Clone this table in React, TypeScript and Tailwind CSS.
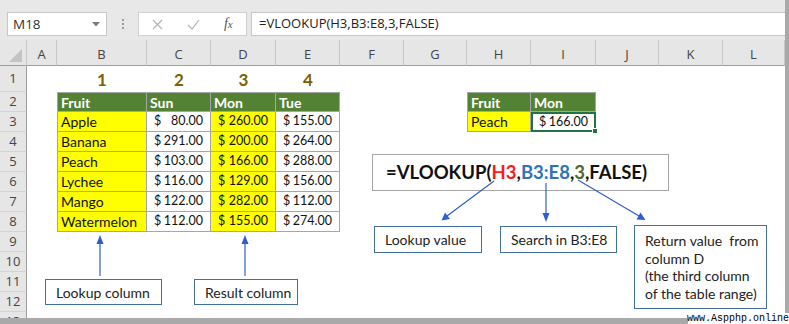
import React from "react";

const COLS = ["A", "B", "C", "D", "E", "F", "G", "H", "I", "J", "K", "L"];

type Row = [string, number, number, number];
const DATA: Row[] = [
  ["Apple", 80, 260, 155],
  ["Banana", 291, 200, 264],
  ["Peach", 103, 166, 288],
  ["Lychee", 116, 129, 156],
  ["Mango", 122, 282, 112],
  ["Watermelon", 112, 155, 274],
];

const fmt = (n: number) => n.toFixed(2);

function Money({ v, yellow }: { v: number; yellow?: boolean }) {
  return (
    <div
      className={
        yellow
          ? "flex items-center justify-between pl-[7px] pr-[7px] bg-[#ffff00] border-r border-b border-[#a6a6a6] text-[#111] text-[12.5px]"
          : "flex items-center justify-between pl-[7px] pr-[7px] bg-white border-r border-b border-[#a6a6a6] text-[#111] text-[12.5px]"
      }
    >
      <span>$</span>
      <span className="tabular-nums">{fmt(v)}</span>
    </div>
  );
}

function RowHead({ n }: { n: number }) {
  return (
    <div className="flex items-center justify-center bg-[#e6e6e6] border-r border-r-[#9e9e9e] border-b border-b-[#d3d3d3] text-[#444] font-['Open_Sans'] text-[13px]">
      {n}
    </div>
  );
}

function Empty() {
  return <div className="bg-white" />;
}

export default function App() {
  const rowsAfter = [9, 10, 11, 12, 13];
  return (
    <div className="relative w-[789px] h-[324px] bg-[#a9a9a9] overflow-hidden font-['Lato'] text-[14px]">
      <div className="w-[785px] h-[318px] bg-white flex flex-col overflow-hidden">
        {/* formula bar */}
        <div className="h-[40px] shrink-0 bg-[#e8e8e8] flex items-start pt-[12px] pl-[7px] gap-0">
          <div className="w-[100px] h-[24px] bg-white border border-[#c6c6c6] flex items-center pl-[5px] pr-[6px] justify-between">
            <span className="font-['Open_Sans'] text-[13.5px] text-[#333]">M18</span>
            <svg width="8" height="5" viewBox="0 0 8 5">
              <path d="M0 0 L8 0 L4 4.5 Z" fill="#7a7a7a" />
            </svg>
          </div>
          <div className="w-[31px] h-[24px] flex flex-col items-center justify-center gap-[2px]">
            <span className="w-[2px] h-[2px] bg-[#9a9a9a]" />
            <span className="w-[2px] h-[2px] bg-[#9a9a9a]" />
            <span className="w-[2px] h-[2px] bg-[#9a9a9a]" />
          </div>
          <div className="w-[109px] h-[24px] bg-white border border-[#d0d0d0] flex items-center">
            <div className="w-[37px] flex justify-center">
              <svg width="11" height="11" viewBox="0 0 11 11">
                <path d="M1 1 L10 10 M10 1 L1 10" stroke="#b3b3b3" strokeWidth="1.2" />
              </svg>
            </div>
            <div className="w-[36px] flex justify-center">
              <svg width="13" height="11" viewBox="0 0 13 11">
                <path d="M1 6 L5 10 L12 1" stroke="#b3b3b3" strokeWidth="1.2" fill="none" />
              </svg>
            </div>
            <div className="w-[36px] flex justify-center">
              <span className="font-['Liberation_Serif'] italic text-[14px] text-[#555] leading-none">
                f<span className="text-[11px]">x</span>
              </span>
            </div>
          </div>
          <div className="ml-[4px] flex-1 h-[24px] bg-white border border-[#c6c6c6] border-r-0 flex items-center pl-[7px]">
            <span className="font-['Open_Sans'] text-[13px] text-[#222]">=VLOOKUP(H3,B3:E8,3,FALSE)</span>
          </div>
        </div>

        {/* sheet */}
        <div className="grid grid-cols-[27px_30px_90px_64px_65px_64px_64px_63px_64px_65px_63px_64px_62px] grid-rows-[26px_26px_20px_20px_20px_20px_20px_20px_20px_20px_20px_20px_20px_20px]">
          {/* column header row */}
          <div className="bg-[#e6e6e6] border-r border-r-[#c6c6c6] border-b border-b-[#9e9e9e] flex items-end justify-end pr-[4px] pb-[3px]">
            <svg width="13" height="13" viewBox="0 0 13 13">
              <path d="M13 0 L13 13 L0 13 Z" fill="#c3c3c3" />
            </svg>
          </div>
          {COLS.map((c) => (
            <div
              key={c}
              className="bg-[#e6e6e6] border-r border-r-[#c6c6c6] border-b border-b-[#9e9e9e] flex items-center justify-center pt-[4px] font-['Open_Sans'] text-[13px] text-[#444]"
            >
              {c}
            </div>
          ))}

          {/* row 1 */}
          <RowHead n={1} />
          <Empty />
          {[1, 2, 3, 4].map((n) => (
            <div key={n} className="flex items-center justify-center pt-[2px] font-bold text-[17px] text-[#7f6000]">
              {n}
            </div>
          ))}
          {Array.from({ length: 7 }).map((_, i) => (
            <Empty key={i} />
          ))}

          {/* row 2 */}
          <RowHead n={2} />
          <Empty />
          <div className="flex items-center pl-[3px] bg-[#548235] border border-[#a6a6a6] text-white font-bold">Fruit</div>
          <div className="flex items-center pl-[3px] bg-[#548235] border-r border-y border-[#a6a6a6] text-white font-bold">Sun</div>
          <div className="flex items-center pl-[3px] bg-[#548235] border-r border-y border-[#a6a6a6] text-white font-bold">Mon</div>
          <div className="flex items-center pl-[3px] bg-[#548235] border-r border-y border-[#a6a6a6] text-white font-bold">Tue</div>
          <Empty />
          <Empty />
          <div className="flex items-center pl-[3px] bg-[#548235] border border-[#a6a6a6] text-white font-bold">Fruit</div>
          <div className="flex items-center pl-[3px] bg-[#548235] border-r border-y border-[#a6a6a6] text-white font-bold">Mon</div>
          <Empty />
          <Empty />
          <Empty />

          {/* rows 3-8 */}
          {DATA.map((d, i) => (
            <React.Fragment key={d[0]}>
              <RowHead n={i + 3} />
              <Empty />
              <div className="flex items-center pl-[3px] bg-[#ffff00] border-l border-r border-b border-[#a6a6a6] text-[#111]">
                {d[0]}
              </div>
              <Money v={d[1]} />
              <Money v={d[2]} yellow />
              <Money v={d[3]} />
              <Empty />
              <Empty />
              {i === 0 ? (
                <>
                  <div className="flex items-center pl-[3px] bg-[#ffff00] border-l border-r border-b border-[#a6a6a6] text-[#111]">
                    Peach
                  </div>
                  <div className="relative flex items-center justify-between pl-[6px] pr-[6px] bg-white border-2 border-[#217346] text-[#111] text-[12.5px]">
                    <span>$</span>
                    <span className="tabular-nums">166.00</span>
                    <span className="absolute right-[-4px] bottom-[-4px] w-[6px] h-[6px] bg-[#217346] border border-white" />
                  </div>
                </>
              ) : (
                <>
                  <Empty />
                  <Empty />
                </>
              )}
              <Empty />
              <Empty />
              <Empty />
            </React.Fragment>
          ))}

          {/* rows 9-13 */}
          {rowsAfter.map((n) => (
            <React.Fragment key={n}>
              <RowHead n={n} />
              {COLS.map((c) => (
                <Empty key={c} />
              ))}
            </React.Fragment>
          ))}
        </div>
      </div>

      {/* floating shapes */}
      <div className="absolute left-[372px] top-[154px] w-[297px] h-[37px] bg-white border border-[#a6a6a6] flex items-center pl-[13px] font-bold text-[18.5px] text-[#111]">
        <span>=VLOOKUP(</span>
        <span className="text-[#ff1a1a]">H3</span>
        <span>,</span>
        <span className="text-[#2e75b6]">B3:E8</span>
        <span>,</span>
        <span className="text-[#4b6b2e]">3</span>
        <span>,FALSE)</span>
      </div>

      <div className="absolute left-[374px] top-[226px] w-[108px] h-[27px] bg-white border border-[#41719c] flex items-center pl-[10px] text-[#222]">
        Lookup value
      </div>
      <div className="absolute left-[500px] top-[226px] w-[117px] h-[27px] bg-white border border-[#41719c] flex items-center pl-[10px] text-[#222]">
        Search in B3:E8
      </div>
      <div className="absolute left-[634px] top-[225px] w-[133px] h-[84px] bg-white border border-[#41719c] pl-[10px] pt-[6px] leading-[17.5px] text-[#222]">
        <div>Return value&nbsp; from</div>
        <div>column D</div>
        <div>(the third column</div>
        <div>of the table range)</div>
      </div>
      <div className="absolute left-[45px] top-[279px] w-[117px] h-[26px] bg-white border border-[#41719c] flex items-center pl-[10px] text-[#222]">
        Lookup column
      </div>
      <div className="absolute left-[194px] top-[279px] w-[104px] h-[26px] bg-white border border-[#41719c] flex items-center pl-[10px] text-[#222]">
        Result column
      </div>

      <svg className="absolute left-0 top-0 pointer-events-none" width="789" height="324" viewBox="0 0 789 324">
        <g stroke="#2e5fd0" strokeWidth="1.2" fill="#2e5fd0">
          <line x1="100" y1="276" x2="100" y2="242" />
          <path d="M100 235 L96.5 244 L103.5 244 Z" stroke="none" />
          <line x1="245" y1="276" x2="245" y2="242" />
          <path d="M245 235 L241.5 244 L248.5 244 Z" stroke="none" />
          <line x1="494" y1="181" x2="447" y2="216" />
          <path d="M441.5 220.5 L445 212.5 L450 219 Z" stroke="none" />
          <line x1="546" y1="183" x2="546" y2="215" />
          <path d="M546 222 L542.5 213 L549.5 213 Z" stroke="none" />
          <line x1="578" y1="180" x2="639" y2="216" />
          <path d="M645.5 220 L636.5 219.5 L640.5 212.5 Z" stroke="none" />
        </g>
      </svg>

      <div className="absolute right-0 bottom-[0px] h-[11px] w-[101px] bg-white flex items-center justify-end font-['Liberation_Mono'] text-[10px] leading-none text-black">
        www.Aspphp.online
      </div>
    </div>
  );
}
